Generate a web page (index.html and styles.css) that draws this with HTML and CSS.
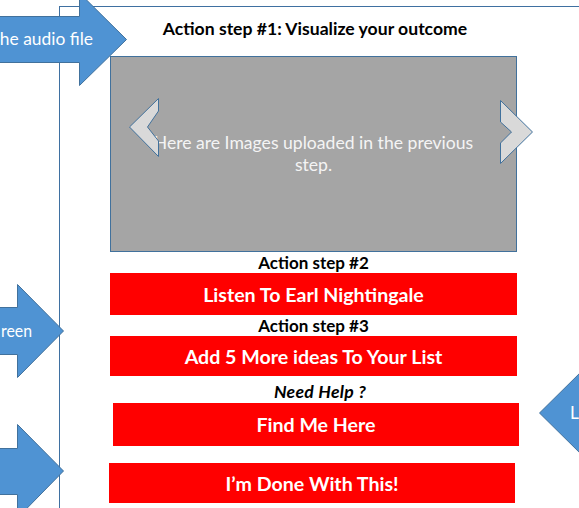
FILE: index.html
```html
<!DOCTYPE html>
<html lang="en">
<head>
<meta charset="utf-8">
<title>Action steps</title>
<link rel="stylesheet" href="styles.css">
</head>
<body>
<div class="frame">
  <div class="col">
    <h1 class="title">Action step #1: Visualize your outcome</h1>
    <div class="viewer">
      <p class="viewer-text">Here are Images uploaded in the previous step.</p>
      <svg class="chev chev-left" width="40" height="70" viewBox="0 0 40 70">
        <polygon points="33.5,4.5 4.5,33 33.5,62.5 33.5,47 22.5,33 33.5,17" />
      </svg>
      <svg class="chev chev-right" width="42" height="72" viewBox="0 0 42 72">
        <polygon points="5.5,5.5 37.5,37 5.5,68.5 5.5,48 16.5,37 5.5,27" />
      </svg>
    </div>
    <div class="label">Action step #2</div>
    <div class="btn">Listen To Earl Nightingale</div>
    <div class="label">Action step #3</div>
    <div class="btn btn-short">Add 5 More ideas To Your List</div>
    <div class="label label-help">Need Help ?</div>
    <div class="btn btn-help">Find Me Here</div>
    <div class="btn btn-done">I’m Done With This!</div>
  </div>
</div>
<svg class="arrows" width="579" height="508" viewBox="0 0 579 508">
  <polygon class="arrow" points="-2,16.5 79.5,16.5 79.5,-7 126.5,39.5 79.5,85.5 79.5,62.5 -2,62.5" />
  <text class="arrow-text" x="93" y="45" text-anchor="end">he audio file</text>
  <polygon class="arrow" points="-2,307.5 17.5,307.5 17.5,284.5 63.5,331 17.5,377.5 17.5,354.5 -2,354.5" />
  <text class="arrow-text" x="1" y="337" textLength="31" lengthAdjust="spacingAndGlyphs">reen</text>
  <polygon class="arrow" points="-2,448.5 17.5,448.5 17.5,424.5 63.5,471 17.5,518 17.5,494.5 -2,494.5" />
  <polygon class="arrow" points="600,390.5 586.5,390.5 586.5,366.5 539.5,413 586.5,459.5 586.5,436.5 600,436.5" />
  <text class="arrow-text" x="570" y="419">L</text>
</svg>
</body>
</html>
```
FILE: styles.css
```css
html, body {
  margin: 0;
  padding: 0;
}
body {
  width: 579px;
  height: 508px;
  overflow: hidden;
  position: relative;
  background: #ffffff;
  font-family: Lato, "Open Sans", sans-serif;
  color: #000000;
}
.frame {
  box-sizing: border-box;
  margin: 6px 0 0 59px;
  width: 520px;
  height: 502px;
  border-top: 1px solid #3f70a1;
  border-left: 1px solid #3f70a1;
}
.col {
  display: flex;
  flex-direction: column;
  width: 407px;
  padding-left: 50px;
}
.title {
  margin: 0 0 17px 0;
  padding-top: 12px;
  height: 20px;
  line-height: 20px;
  font-size: 17.6px;
  font-weight: 700;
  text-align: center;
  padding-left: 3px;
  white-space: nowrap;
}
.viewer {
  position: relative;
  box-sizing: border-box;
  height: 196px;
  background: #a5a5a5;
  border: 1px solid #41719c;
  display: flex;
  align-items: center;
  justify-content: center;
}
.viewer-text {
  margin: 0;
  width: 350px;
  text-align: center;
  color: #f4f4f4;
  font-size: 17.6px;
  line-height: 22px;
}
.chev {
  position: absolute;
  overflow: visible;
}
.chev polygon {
  fill: #d9d9d9;
  stroke: #41719c;
  stroke-width: 1;
}
.chev-left {
  left: 14px;
  top: 37px;
}
.chev-right {
  left: 384px;
  top: 38px;
}
.label {
  height: 21px;
  line-height: 21px;
  font-size: 17px;
  font-weight: 700;
  text-align: center;
}
.label-help {
  height: 22px;
  padding-top: 5px;
  padding-left: 13px;
  line-height: 22px;
  font-size: 17.6px;
  font-style: italic;
  letter-spacing: 0.3px;
}
.btn {
  height: 42px;
  background: #ff0000;
  color: #ffffff;
  font-size: 19.6px;
  font-weight: 700;
  display: flex;
  align-items: center;
  justify-content: center;
}
.btn-short {
  height: 40px;
}
.btn-help {
  height: 43px;
  margin-left: 3px;
  margin-right: -2px;
  margin-bottom: 17px;
}
.btn-done {
  height: 40px;
  margin-left: -1px;
  margin-right: 2px;
}
.arrows {
  position: absolute;
  left: 0;
  top: 0;
  overflow: hidden;
  pointer-events: none;
}
.arrow {
  fill: #4f93d3;
  stroke: #41719c;
  stroke-width: 1;
}
.arrow-text {
  fill: #ffffff;
  font-family: Lato, "Open Sans", sans-serif;
  font-size: 17.4px;
}
```
